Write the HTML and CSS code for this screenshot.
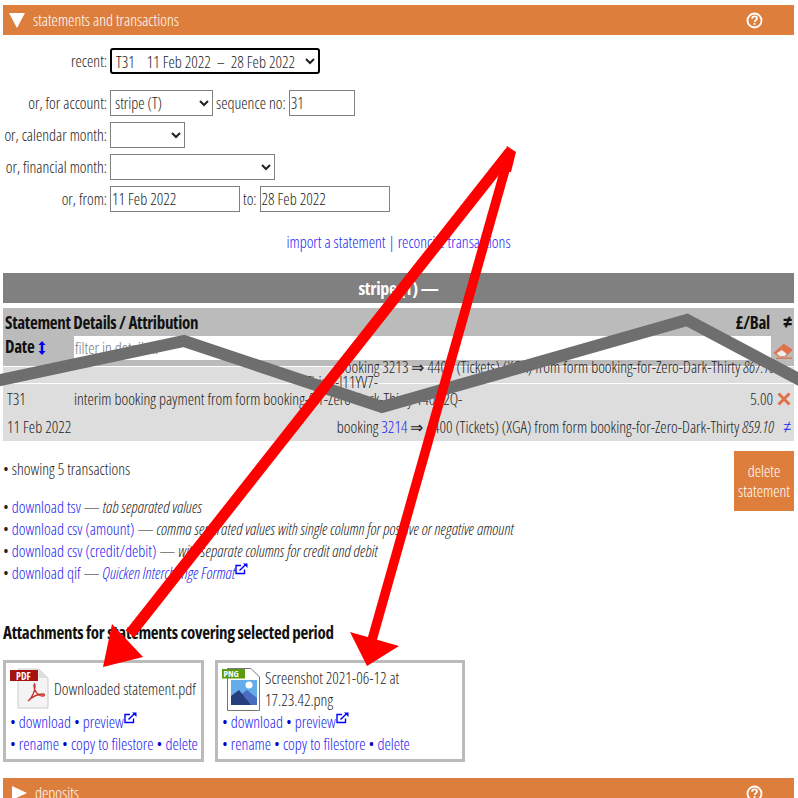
FILE: index.html
```html
<!DOCTYPE html>
<html>
  <head>
    <meta name="viewport" content="width=device-width, initial-scale=1.0" />
    <title>Statements and transactions</title>
    <link rel="stylesheet" href="styles.css">
  </head>
  <body>
    <main class="page">
      <div class="section-bar">
        <span class="tri-down"></span>
        <span class="section-title">statements and transactions</span>
        <svg class="help" viewBox="0 0 16 16"><circle cx="8" cy="8" r="6.6" fill="none" stroke="#fff" stroke-width="1.7"/><path d="M5.800 6.400c0-1.400 1-2.200 2.300-2.200s2.200.8 2.200 2c0 1.700-2.100 1.600-2.100 3.200" fill="none" stroke="#fff" stroke-width="1.700"/><rect x="7.200" y="10.400" width="1.700" height="1.700" fill="#fff"/></svg>
      </div>

      <form class="filters">
        <div class="row row-recent">
          <label>recent:</label>
          <select class="sel sel-recent"><option>T31 &nbsp; &nbsp;11 Feb 2022 &nbsp;&ndash; &nbsp;28 Feb 2022</option></select>
        </div>
        <div class="row row-account">
          <label>or, for account:</label>
          <select class="sel sel-account"><option>stripe (T)</option></select>
          <span>sequence no:</span>
          <input class="txt txt-seq" type="text" value="31" />
        </div>
        <div class="row">
          <label>or, calendar month:</label>
          <select class="sel sel-cal"><option></option></select>
        </div>
        <div class="row">
          <label>or, financial month:</label>
          <select class="sel sel-fin"><option></option></select>
        </div>
        <div class="row">
          <label>or, from:</label>
          <input class="txt txt-date" type="text" value="11 Feb 2022" />
          <span>to:</span>
          <input class="txt txt-date" type="text" value="28 Feb 2022" />
        </div>
      </form>

      <div class="links"><a href="#">import a statement</a> | <a href="#">reconcile transactions</a></div>

      <div class="acct-bar">stripe (T) &mdash;</div>

      <div class="table">
        <div class="thead">
          <div class="th-row">
            <span>Statement Details / Attribution</span>
            <span class="th-right"><span>&pound;/Bal</span><span class="th-ne">&ne;</span></span>
          </div>
          <div class="th-row th-filter">
            <span class="th-date">Date <svg class="sort" viewBox="0 0 8 14"><path d="M4 0 7.500 4H5.200V10H7.500L4 14 .5 10H2.800V4H.5z" fill="#00f"/></svg></span>
            <input class="filter" type="text" placeholder="filter in details..." />
            <svg class="eraser" viewBox="0 0 20 16"><path d="M.5 10 10 1.200c.5-.5 1.200-.5 1.700 0l7.300 5c.5.400.5 1.100 0 1.500L13 13.500H5.500z" fill="#e0714a"/><path d="M3.500 10.300 6.500 13h5.300l2-1.900-5-4z" fill="#eee"/><path d="M3 15.200h16" stroke="#e0714a" stroke-width="1.300"/></svg>
          </div>
        </div>
        <div class="tr tr-short">
          <div class="line-right">booking 3213 &rArr; 4400 (Tickets) (XGA) from form booking-for-Zero-Dark-Thirty <em>867.10</em></div>
          <div class="line-ref">-Thirty-J11YV7-</div>
        </div>
        <div class="tr">
          <div class="line">
            <span class="cell-seq">T31</span>
            <span class="cell-desc">interim booking payment from form booking-for-Zero-Dark-Thirty-Y40D2Q-</span>
            <span class="cell-amt">5.00</span>
            <svg class="cross" viewBox="0 0 14 14"><path d="M1.500 1.500l11 11M12.500 1.500l-11 11" stroke="#e0714a" stroke-width="3"/></svg>
          </div>
          <div class="line">
            <span class="cell-dt">11 Feb 2022</span>
            <span class="cell-detail">booking <a href="#">3214</a> &rArr; 4400 (Tickets) (XGA) from form booking-for-Zero-Dark-Thirty <em>859.10</em></span>
            <a class="ne" href="#">&ne;</a>
          </div>
        </div>
      </div>

      <div class="below">
        <div class="downloads">
          <p class="showing">&bull; showing 5 transactions</p>
          <p>&bull; <a href="#">download tsv</a> &mdash; <em>tab separated values</em></p>
          <p>&bull; <a href="#">download csv (amount)</a> &mdash; <em>comma separated values with single column for positive or negative amount</em></p>
          <p>&bull; <a href="#">download csv (credit/debit)</a> &mdash; <em>with separate columns for credit and debit</em></p>
          <p>&bull; <a href="#">download qif</a> &mdash; <a href="#"><em>Quicken Interchange Format</em></a><svg class="ext" viewBox="0 0 13 12"><path d="M9.500 6.500V10.500H1V2.500H6" fill="none" stroke="#00f" stroke-width="1.400"/><path d="M4.500 7.500 10.500 1.800" stroke="#00f" stroke-width="1.500"/><path d="M8 .5h4.500V5z" fill="#00f"/></svg></p>
        </div>
        <a class="del-btn" href="#">delete statement</a>
      </div>

      <h3 class="att-head">Attachments for statements covering selected period</h3>
      <div class="cards">
        <div class="card card-pdf">
          <div class="file">
            <svg class="file-ico" viewBox="0 0 40 42">
              <path d="M9 1H30L39 10V40H9z" fill="#f4f4f4" stroke="#ccc"/>
              <path d="M30 1V10H39z" fill="#ddd"/>
              <rect x="1" y="2" width="28" height="11" fill="#a5120f"/>
              <text x="7" y="11.500" class="pdf-tag">PDF</text>
              <path d="M19 33c4-3 7-10 7-15 0-3-1-3-1 0 0 5 4 10 9 10 2 0 2-2 0-2-5 0-11 3-15 7z" fill="none" stroke="#c8322c" stroke-width="1.300"/>
            </svg>
            <span class="file-name">Downloaded statement.pdf</span>
          </div>
          <div class="card-links">&bull; <a href="#">download</a> &bull; <a href="#">preview</a><svg class="ext" viewBox="0 0 13 12"><path d="M9.500 6.500V10.500H1V2.500H6" fill="none" stroke="#00f" stroke-width="1.400"/><path d="M4.500 7.500 10.500 1.800" stroke="#00f" stroke-width="1.500"/><path d="M8 .5h4.500V5z" fill="#00f"/></svg></div>
          <div class="card-links">&bull; <a href="#">rename</a> &bull; <a href="#">copy to filestore</a> &bull; <a href="#">delete</a></div>
        </div>
        <div class="card card-png">
          <div class="file">
            <svg class="file-ico ico-png" viewBox="0 0 38 43">
              <path d="M5.500 .5H29L37.500 9V42.500H5.500z" fill="#fff" stroke="#777"/>
              <rect x="0" y="1" width="23" height="9.500" fill="#5b9a12"/>
              <text x="1.500" y="9.300" class="png-tag">PNG</text>
              <rect x="9" y="12" width="26" height="25" fill="#64ade8"/>
              <circle cx="27" cy="17" r="3.500" fill="#fff"/>
              <path d="M17 28l8-6 10 8v7H17z" fill="#4a6bc0"/>
              <path d="M9 37V28l8-6L29 37z" fill="#263f7c"/>
            </svg>
            <span class="file-name file-wrap">Screenshot 2021-06-12 at 17.23.42.png</span>
          </div>
          <div class="card-links">&bull; <a href="#">download</a> &bull; <a href="#">preview</a><svg class="ext" viewBox="0 0 13 12"><path d="M9.500 6.500V10.500H1V2.500H6" fill="none" stroke="#00f" stroke-width="1.400"/><path d="M4.500 7.500 10.500 1.800" stroke="#00f" stroke-width="1.500"/><path d="M8 .5h4.500V5z" fill="#00f"/></svg></div>
          <div class="card-links">&bull; <a href="#">rename</a> &bull; <a href="#">copy to filestore</a> &bull; <a href="#">delete</a></div>
        </div>
      </div>

      <div class="section-bar bar-deposits">
        <span class="tri-right"></span>
        <span class="section-title">deposits</span>
        <svg class="help" viewBox="0 0 16 16"><circle cx="8" cy="8" r="6.600" fill="none" stroke="#fff" stroke-width="1.700"/><path d="M5.800 6.400c0-1.400 1-2.200 2.300-2.200s2.200.8 2.200 2c0 1.700-2.100 1.600-2.100 3.200" fill="none" stroke="#fff" stroke-width="1.700"/><rect x="7.200" y="10.400" width="1.700" height="1.700" fill="#fff"/></svg>
      </div>
    </main>

    <!-- scribbles drawn over the screenshot -->
    <svg class="scribble" viewBox="0 0 798 798">
      <path d="M-4 381 184 341 382 407 687 320 802 381" fill="none" stroke="#6e6e6e" stroke-width="12"/>
      <path d="M510 152 130 634" fill="none" stroke="#f00" stroke-width="11"/>
      <path d="M510 152 372 640" fill="none" stroke="#f00" stroke-width="9.500"/>
      <path d="M507 146 516 152 511 172 498 172z" fill="#f00"/>
      <path d="M103 667 143 657 112 624z" fill="#f00"/>
      <path d="M350 632 399 646 367 666z" fill="#f00"/>
    </svg>
  </body>
</html>
```

FILE: styles.css
```css
* {
  box-sizing: border-box;
  margin: 0;
  padding: 0;
}
body {
  background: #fff;
  color: #222;
  font-family: "Open Sans", sans-serif;
  font-stretch: 75%;
  font-weight: 300;
  font-size: 16px;
  overflow: hidden;
  height: 798px;
}
a {
  color: #2222ee;
  text-decoration: none;
}
.page {
  padding: 5px 4px 0 3px;
}

/* orange section bars */
.section-bar {
  background: #de7e3c;
  height: 30px;
  display: flex;
  align-items: center;
  color: #fff;
}
.tri-down {
  margin-left: 6px;
  border-left: 8px solid transparent;
  border-right: 8px solid transparent;
  border-top: 15px solid #fff;
}
.tri-right {
  margin-left: 9px;
  border-top: 7px solid transparent;
  border-bottom: 7px solid transparent;
  border-left: 15px solid #fff;
}
.section-title {
  margin-left: 8px;
}
.help {
  width: 17px;
  height: 17px;
  margin-left: auto;
  margin-right: 31px;
}
.bar-deposits {
  margin-top: 16px;
}

/* filter form */
.filters {
  margin-top: 13px;
  display: flex;
  flex-direction: column;
  gap: 6px;
}
.row {
  display: flex;
  align-items: center;
  gap: 3px;
  height: 26px;
}
.row label {
  width: 104px;
  text-align: right;
  white-space: nowrap;
  flex: none;
}
.row-recent {
  margin-bottom: 10px;
}
.sel, .txt {
  font: inherit;
  font-stretch: 75%;
  height: 26px;
  border: 1px solid #808080;
  background: #fff;
  color: #222;
  border-radius: 0;
}
.sel {
  padding-left: 0;
}
.txt {
  padding: 0 1px;
}
.sel-recent {
  width: 210px;
  border: 2px solid #000;
  border-radius: 3px;
}
.sel-account {
  width: 103px;
}
.sel-cal {
  width: 75px;
}
.sel-fin {
  width: 165px;
}
.txt-seq {
  width: 66px;
}
.txt-date {
  width: 130px;
}
.links {
  margin-top: 19px;
  text-align: center;
  color: #2222ee;
}

/* table */
.acct-bar {
  margin-top: 20px;
  height: 30px;
  background: #808080;
  color: #fff;
  font-weight: 700;
  font-size: 18px;
  letter-spacing: -0.3px;
  line-height: 30px;
  text-align: center;
}
.table {
  margin-top: 5px;
}
.thead {
  background: #bbb;
  font-weight: 700;
  font-size: 17px;
  letter-spacing: -0.3px;
  color: #111;
  padding-bottom: 6px;
}
.th-row {
  height: 28px;
  padding: 0 2px;
  display: flex;
  align-items: center;
  justify-content: space-between;
}
.th-right {
  display: flex;
  align-items: center;
  gap: 13px;
}
.th-ne {
  font-size: 20px;
  line-height: 20px;
}
.th-filter {
  height: 24px;
  padding: 0;
  align-items: flex-start;
}
.th-date {
  width: 71px;
  padding-left: 2px;
  flex: none;
  line-height: 22px;
}
.sort {
  width: 8px;
  height: 14px;
  vertical-align: -2px;
  margin-left: 1px;
}
.filter {
  flex: 1;
  height: 24px;
  border: 0;
  font: 300 16px "Open Sans", sans-serif;
  font-stretch: 75%;
  padding: 0 1px;
}
.eraser {
  width: 20px;
  height: 16px;
  margin: 7px 1px 0 2px;
  flex: none;
}
.tr {
  background: #ddd;
  border-top: 1px solid #fff;
  height: 58px;
}
.tr-short {
  height: 17px;
}
.line-right {
  text-align: right;
  padding-right: 19px;
  margin-top: -7px;
  line-height: 15px;
  white-space: nowrap;
}
.line-ref {
  text-align: right;
  padding-right: 416px;
  line-height: 15px;
}
.line {
  display: flex;
  height: 27px;
  align-items: center;
  padding: 0 3px 0 4px;
}
.line:first-child {
  height: 29px;
}
.cell-seq, .cell-dt {
  width: 67px;
  flex: none;
  white-space: nowrap;
}
.cell-desc {
  flex: 1;
}
.cell-amt {
  margin-right: 4px;
}
.cross {
  width: 14px;
  height: 14px;
}
.cell-detail {
  flex: 1;
  text-align: right;
}
.ne {
  width: 17px;
  text-align: right;
  font-size: 20px;
  line-height: 20px;
}

/* downloads and delete button */
.below {
  display: flex;
  justify-content: space-between;
  margin-top: 10px;
}
.downloads {
  padding-top: 7px;
}
.downloads p {
  line-height: 22px;
}
.showing {
  margin-bottom: 16px;
}
.ext {
  width: 13px;
  height: 12px;
  vertical-align: 4px;
}
.del-btn {
  width: 60px;
  height: 60px;
  background: #de7e3c;
  color: #fff;
  text-align: center;
  padding-top: 10px;
  line-height: 20px;
}
.att-head {
  font-size: 17px;
  font-weight: 700;
  letter-spacing: -0.3px;
  color: #111;
  margin-top: 39px;
  line-height: 20px;
}
.cards {
  margin-top: 17px;
  display: flex;
  gap: 11px;
}
.card {
  height: 102px;
  border: 3px solid #bbb;
  padding: 4px 4px 0;
}
.card-pdf {
  width: 201px;
}
.card-png {
  width: 250px;
}
.file {
  display: flex;
  align-items: center;
  height: 44px;
  gap: 5px;
  line-height: 22px;
}
.file-name {
  white-space: nowrap;
}
.file-ico {
  width: 40px;
  height: 42px;
  flex: none;
  margin-left: -1px;
}
.ico-png {
  width: 38px;
  height: 43px;
  margin-left: 0;
}
.file-wrap {
  width: 150px;
  white-space: normal;
}
.card-links {
  line-height: 22px;
  color: #00c;
  white-space: nowrap;
}
.pdf-tag {
  font-family: "Open Sans", sans-serif;
  font-weight: 700;
  font-size: 10px;
  fill: #fff;
}
.png-tag {
  font-family: "Open Sans", sans-serif;
  font-weight: 700;
  font-size: 9px;
  fill: #fff;
}
.scribble {
  position: absolute;
  left: 0;
  top: 0;
  width: 798px;
  height: 798px;
  pointer-events: none;
}
```
